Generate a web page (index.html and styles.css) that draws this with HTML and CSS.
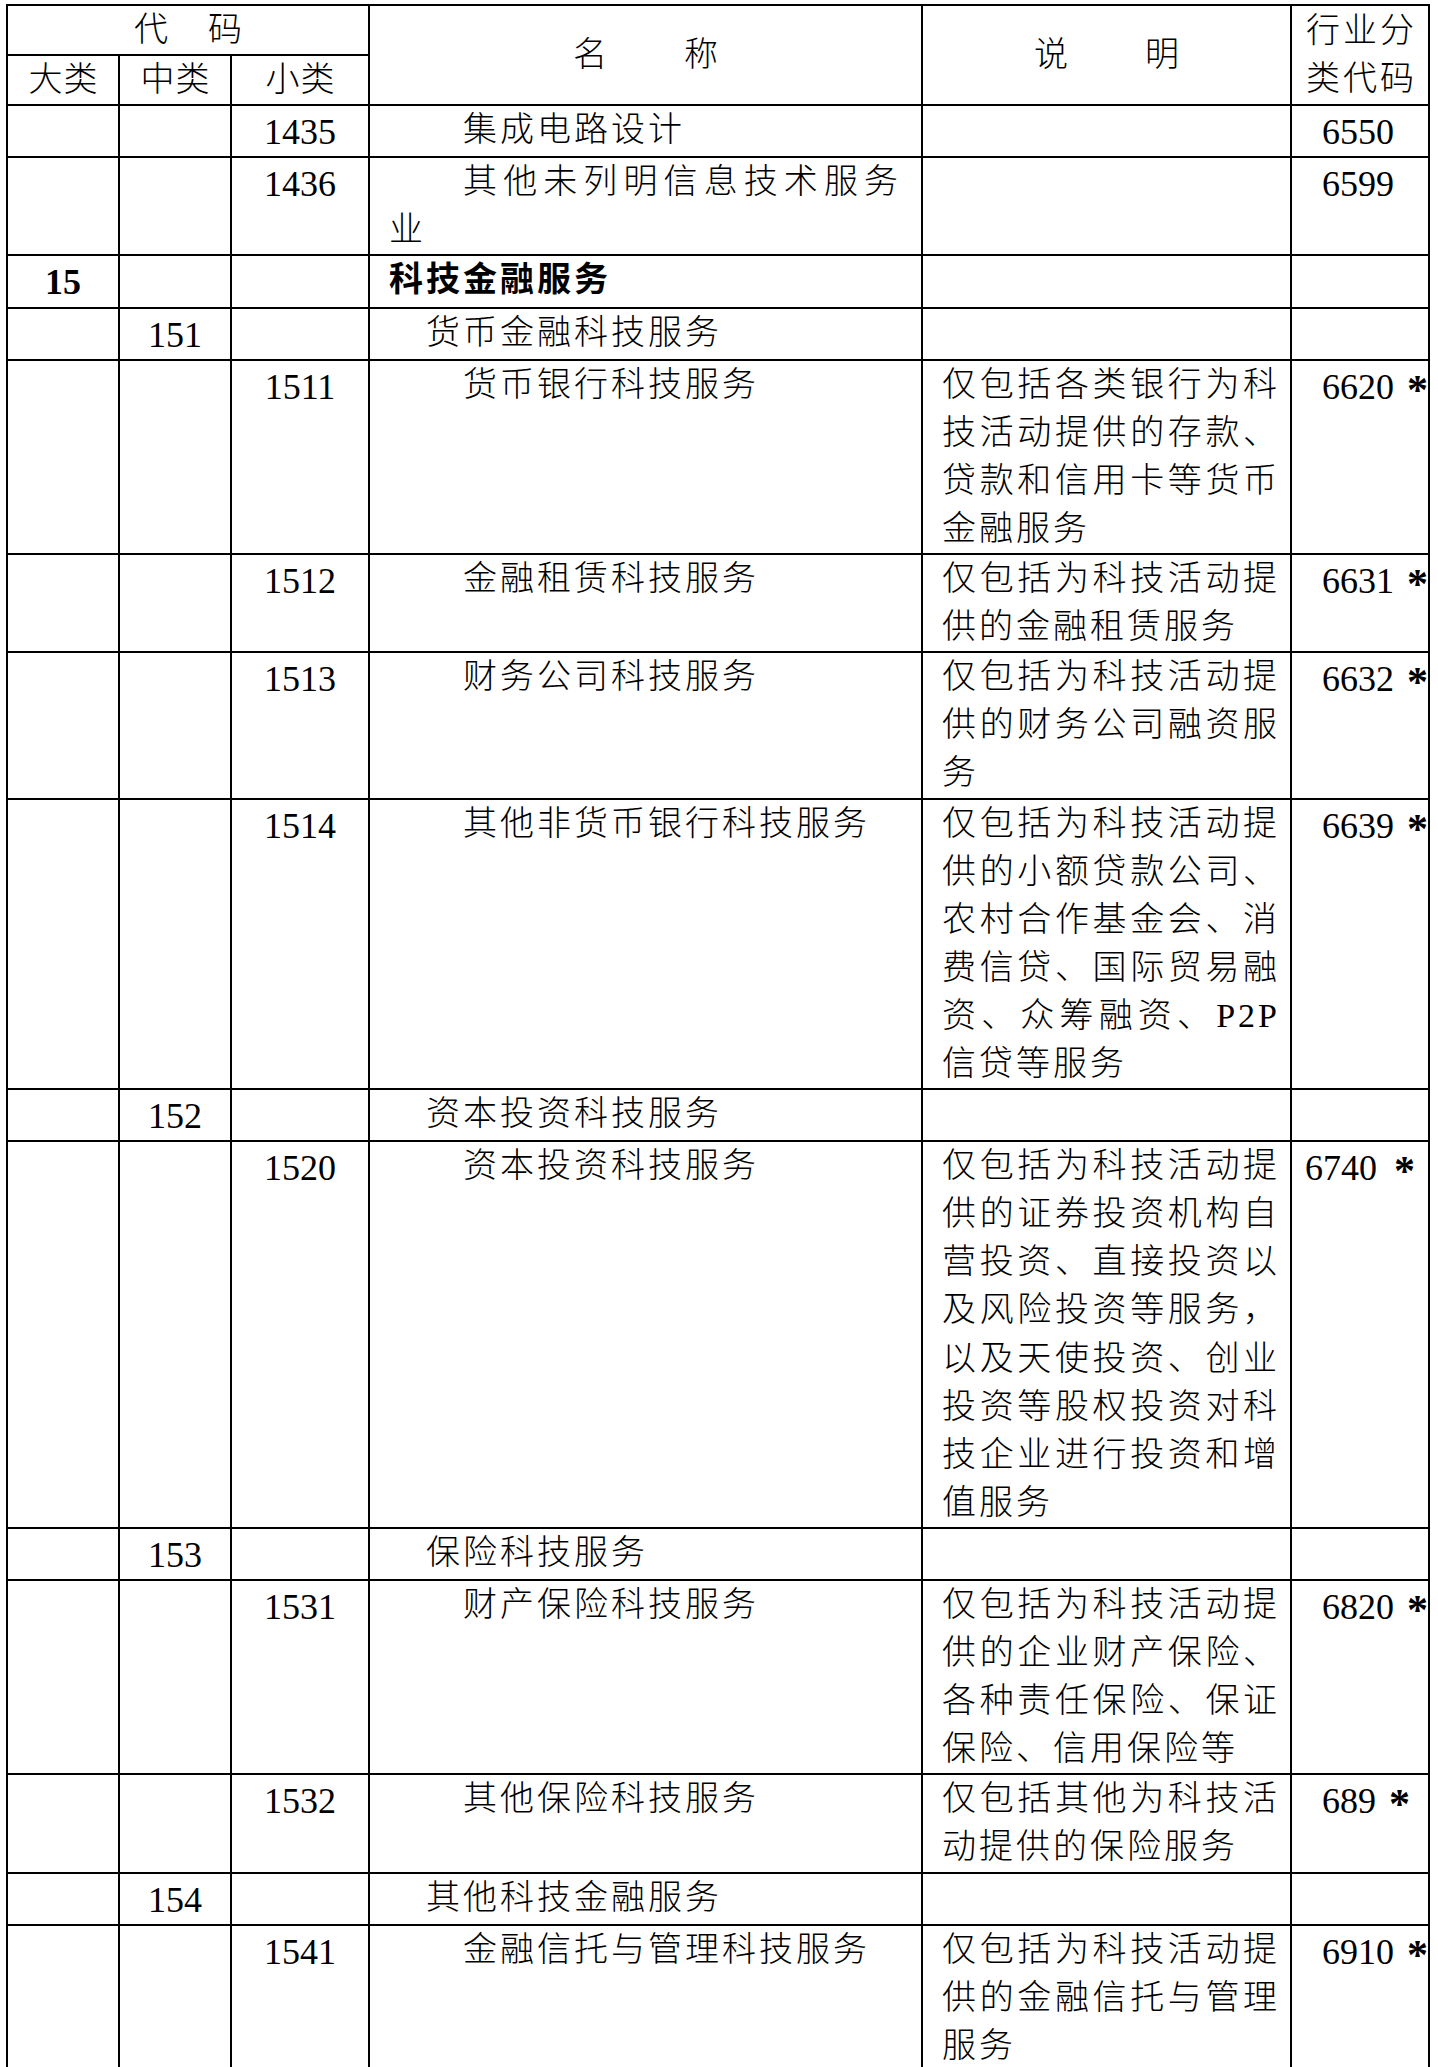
FILE: index.html
```html
<!DOCTYPE html>
<html lang="zh-CN">
<head>
<meta charset="utf-8">
<title>科技金融服务分类</title>
<link rel="stylesheet" href="styles.css">
</head>
<body>
<table class="cls">
  <colgroup>
    <col class="c-big"><col class="c-mid"><col class="c-small"><col class="c-name"><col class="c-desc"><col class="c-ind">
  </colgroup>
  <thead>
    <tr>
      <th colspan="3" class="h-code">代　码</th>
      <th rowspan="2" class="h-wide">名　　称</th>
      <th rowspan="2" class="h-wide">说　　明</th>
      <th rowspan="2" class="h-ind">行业分<br>类代码</th>
    </tr>
    <tr>
      <th class="h-sub">大类</th><th class="h-sub">中类</th><th class="h-sub">小类</th>
    </tr>
  </thead>
  <tbody>
    <tr><td></td><td></td><td class="num">1435</td><td class="name l2">集成电路设计</td><td class="desc"></td><td class="ind">6550</td></tr>
    <tr><td></td><td></td><td class="num">1436</td><td class="name l2">其他未列明信息技术服务业</td><td class="desc"></td><td class="ind">6599</td></tr>
    <tr><td class="num bold">15</td><td></td><td></td><td class="name l0 bold">科技金融服务</td><td class="desc"></td><td class="ind"></td></tr>
    <tr><td></td><td class="num">151</td><td></td><td class="name l1">货币金融科技服务</td><td class="desc"></td><td class="ind"></td></tr>
    <tr><td></td><td></td><td class="num">1511</td><td class="name l2">货币银行科技服务</td><td class="desc">仅包括各类银行为科技活动提供的存款、贷款和信用卡等货币金融服务</td><td class="ind">6620 <span class="star">*</span></td></tr>
    <tr><td></td><td></td><td class="num">1512</td><td class="name l2">金融租赁科技服务</td><td class="desc">仅包括为科技活动提供的金融租赁服务</td><td class="ind">6631 <span class="star">*</span></td></tr>
    <tr><td></td><td></td><td class="num">1513</td><td class="name l2">财务公司科技服务</td><td class="desc">仅包括为科技活动提供的财务公司融资服务</td><td class="ind">6632 <span class="star">*</span></td></tr>
    <tr><td></td><td></td><td class="num">1514</td><td class="name l2">其他非货币银行科技服务</td><td class="desc">仅包括为科技活动提供的小额贷款公司、农村合作基金会、消费信贷、国际贸易融资、众筹融资、P2P信贷等服务</td><td class="ind">6639 <span class="star">*</span></td></tr>
    <tr><td></td><td class="num">152</td><td></td><td class="name l1">资本投资科技服务</td><td class="desc"></td><td class="ind"></td></tr>
    <tr><td></td><td></td><td class="num">1520</td><td class="name l2">资本投资科技服务</td><td class="desc">仅包括为科技活动提供的证券投资机构自营投资、直接投资以及风险投资等服务，以及天使投资、创业投资等股权投资对科技企业进行投资和增值服务</td><td class="ind ind-wide">6740 <span class="star">*</span></td></tr>
    <tr><td></td><td class="num">153</td><td></td><td class="name l1">保险科技服务</td><td class="desc"></td><td class="ind"></td></tr>
    <tr><td></td><td></td><td class="num">1531</td><td class="name l2">财产保险科技服务</td><td class="desc">仅包括为科技活动提供的企业财产保险、各种责任保险、保证保险、信用保险等</td><td class="ind">6820 <span class="star">*</span></td></tr>
    <tr><td></td><td></td><td class="num">1532</td><td class="name l2">其他保险科技服务</td><td class="desc">仅包括其他为科技活动提供的保险服务</td><td class="ind">689 <span class="star">*</span></td></tr>
    <tr><td></td><td class="num">154</td><td></td><td class="name l1">其他科技金融服务</td><td class="desc"></td><td class="ind"></td></tr>
    <tr><td></td><td></td><td class="num">1541</td><td class="name l2">金融信托与管理科技服务</td><td class="desc">仅包括为科技活动提供的金融信托与管理服务</td><td class="ind">6910 <span class="star">*</span></td></tr>
  </tbody>
</table>
</body>
</html>
```

FILE: styles.css
```css
html, body {
  margin: 0;
  padding: 0;
  background: #fff;
}

body {
  font-family: "Liberation Serif", "Noto Sans CJK SC", serif;
  color: #000;
}

.cls {
  border-collapse: collapse;
  table-layout: fixed;
  width: 1424px;
  margin: 4px 0 0 6px;
  font-size: 34px;
  line-height: 48.1px;
}

.c-big { width: 112px; }
.c-mid { width: 112px; }
.c-small { width: 138px; }
.c-name { width: 553px; }
.c-desc { width: 369px; }
.c-ind { width: 138px; }

.cls th,
.cls td {
  border: 2px solid #000;
  padding: 0;
  vertical-align: top;
  font-weight: 300;
}

.cls th {
  text-align: center;
  vertical-align: middle;
  letter-spacing: 3px;
  padding-left: 3px;
}

.cls .h-sub {
  letter-spacing: 1px;
  padding-left: 1px;
}

.cls .num {
  text-align: center;
  font-size: 36px;
  padding-top: 2px;
}

.cls .name {
  text-align: justify;
  letter-spacing: 3px;
  padding: 0 20px 0 19px;
}

.cls .l1 { text-indent: 37px; }
.cls .l2 { text-indent: 74px; }

.cls .desc {
  text-align: justify;
  letter-spacing: 3px;
  padding: 0 10px 0 19px;
}

.cls .ind {
  text-align: left;
  white-space: nowrap;
  font-size: 36px;
  padding: 2px 0 0 30px;
}

.cls .ind-wide {
  padding-left: 13px;
}

.star {
  font-family: "Liberation Serif", serif;
  font-size: 42px;
  font-weight: 700;
  line-height: 0;
  vertical-align: -5px;
  margin-left: 4px;
}

.ind-wide .star {
  margin-left: 8px;
}

.cls .bold {
  font-weight: 700;
}
```
